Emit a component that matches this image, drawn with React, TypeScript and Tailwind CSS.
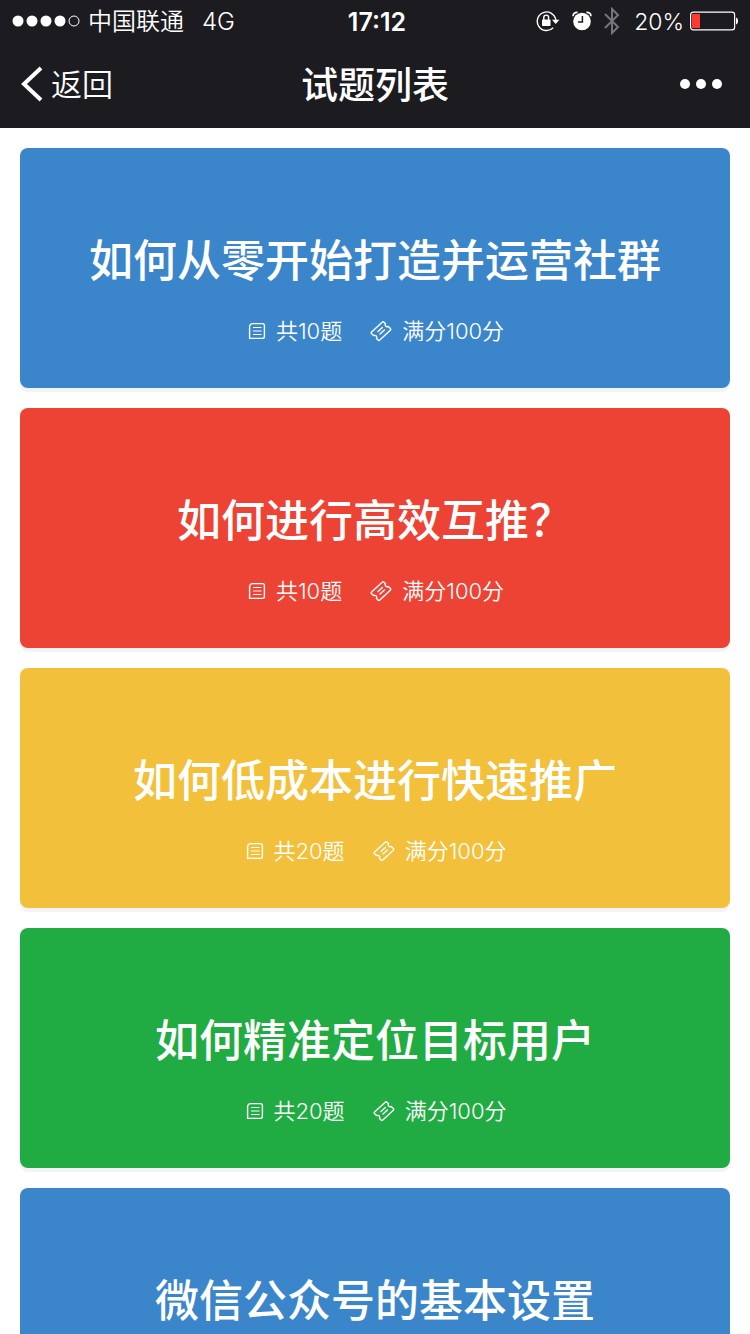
import clsx from "clsx";

interface Quiz {
   id: number;
   title: string;
   questions: number;
   score: number;
}

const quizzes: Quiz[] = [
   { id: 1, title: "如何从零开始打造并运营社群", questions: 10, score: 100 },
   { id: 2, title: "如何进行高效互推？", questions: 10, score: 100 },
   { id: 3, title: "如何低成本进行快速推广", questions: 20, score: 100 },
   { id: 4, title: "如何精准定位目标用户", questions: 20, score: 100 },
   { id: 5, title: "微信公众号的基本设置", questions: 20, score: 100 },
];

const cardColors = ["bg-[#3b86ca]", "bg-[#ed4335]", "bg-[#f2c03a]", "bg-[#21ac43]"];

function SignalDots() {
   return (
      <svg width="68" height="12" viewBox="0 0 68 12" fill="#fff" aria-hidden="true">
         <circle cx="6" cy="6" r="5.5" />
         <circle cx="20" cy="6" r="5.5" />
         <circle cx="34" cy="6" r="5.5" />
         <circle cx="48" cy="6" r="5.5" />
         <circle cx="62" cy="6" r="5" fill="none" stroke="#fff" />
      </svg>
   );
}

function RotationLockIcon() {
   return (
      <svg width="24" height="22" viewBox="0 0 24 22" aria-hidden="true">
         <path d="M17.2 17.8A9.3 9.3 0 1 1 19.8 10" fill="none" stroke="#fff" strokeWidth="1.4" />
         <path d="M16 9.8h7.4l-3.7 4.2z" fill="#fff" />
         <rect x="6" y="9.5" width="8.5" height="6.5" rx="0.8" fill="#fff" />
         <path d="M7.8 10V7.5a2.4 2.4 0 0 1 4.8 0V10" fill="none" stroke="#fff" strokeWidth="1.4" />
      </svg>
   );
}

function AlarmIcon() {
   return (
      <svg width="20" height="20" viewBox="0 0 20 20" aria-hidden="true">
         <circle cx="10" cy="10.5" r="8.8" fill="#fff" />
         <path d="M1 5.2C1 2.6 3 1.2 5.6 1.4M19 5.2c0-2.6-2-4-4.6-3.8" fill="none" stroke="#fff" strokeWidth="1.6" />
         <path d="M10.4 5v6H6" fill="none" stroke="#1c1b20" strokeWidth="1.5" />
      </svg>
   );
}

function BluetoothIcon() {
   return (
      <svg width="16" height="28" viewBox="0 0 16 28" aria-hidden="true">
         <path d="M1 7l13 13-6 6V2l6 6L1 21" fill="none" stroke="#77767a" strokeWidth="2" />
      </svg>
   );
}

function BatteryIcon() {
   return (
      <svg width="48" height="20" viewBox="0 0 48 20" aria-hidden="true">
         <rect x="0.6" y="1.1" width="44" height="17.8" rx="2.6" fill="none" stroke="#fff" strokeWidth="1.2" />
         <rect x="2" y="3" width="8" height="14" fill="#ff3b30" />
         <path d="M46 6.5c2.7.6 2.7 6.4 0 7z" fill="#fff" />
      </svg>
   );
}

function ListIcon() {
   return (
      <svg width="18" height="18" viewBox="0 0 18 18" fill="none" stroke="#fff" strokeWidth="1.4" aria-hidden="true">
         <path d="M4.6 1.6h10a1.8 1.8 0 0 1 1.8 1.8v11.2a1.8 1.8 0 0 1-1.8 1.8H1.6V4.6a3 3 0 0 1 3-3z" />
         <path d="M5 5.5h8.5M5 9h8.5M5 12.5h8.5" strokeWidth="1.2" />
      </svg>
   );
}

function TicketIcon() {
   return (
      <svg width="22" height="22" viewBox="0 0 22 22" fill="none" stroke="#fff" strokeWidth="1.4" strokeLinejoin="round" strokeLinecap="round" aria-hidden="true">
         <path d="M12.2 2.2a1.3 1.3 0 0 1 1.8 0l1.5 1.5c-.5 1-.3 1.9.3 2.5s1.5.8 2.5.3l2 1.9a1.3 1.3 0 0 1 0 1.8L9.8 20a1.3 1.3 0 0 1-1.8 0l-1.5-1.4c.4-1 .3-1.9-.3-2.6s-1.6-.8-2.6-.4l-2-1.9a1.3 1.3 0 0 1 0-1.8z" />
         <path d="M8 11.6l4.4-4.1M10 14l4.4-4.1" />
      </svg>
   );
}

function StatusBar() {
   return (
      <div className="grid h-10 grid-cols-[1fr_auto_1fr] items-center px-3 leading-10">
         <div className="flex items-center text-2xl font-[350]">
            <SignalDots />
            <span className="ml-2 pt-[2px]">中国联通</span>
            <span className="ml-[18px] pt-[2px]">4G</span>
         </div>
         <time className="pt-[2px] pl-1 text-[25px] font-semibold">17:12</time>
         <div className="flex items-center justify-end text-[23px] font-[350]">
            <RotationLockIcon />
            <span className="ml-3"><AlarmIcon /></span>
            <span className="ml-3"><BluetoothIcon /></span>
            <span className="ml-[14px] pt-[2px]">20%</span>
            <span className="ml-[6px]"><BatteryIcon /></span>
         </div>
      </div>
   );
}

function NavBar() {
   return (
      <div className="grid h-22 grid-cols-[1fr_auto_1fr] items-center px-5">
         <button type="button" className="flex items-center gap-2 text-[31px] font-[350]">
            <svg width="23" height="36" viewBox="0 0 23 36" fill="none" stroke="#fff" strokeWidth="4" aria-hidden="true">
               <path d="M21 2L4 18l17 16" />
            </svg>
            <span className="pt-[2px]">返回</span>
         </button>
         <h1 className="pt-1 text-[37px] font-medium">试题列表</h1>
         <button type="button" aria-label="更多" className="flex justify-end gap-[6px] pr-2">
            <span className="size-[10px] rounded-full bg-white" />
            <span className="size-[10px] rounded-full bg-white" />
            <span className="size-[10px] rounded-full bg-white" />
         </button>
      </div>
   );
}

function QuizCard({ quiz, color }: { quiz: Quiz; color: string }) {
   return (
      <a href={`#quiz-${quiz.id}`} className={clsx("block rounded-lg pt-20 pb-10 text-center text-white shadow-[0_4px_0_#f4f4f7]", color)}>
         <h2 className="text-[44px] leading-[66px] font-medium">{quiz.title}</h2>
         <div className="mt-5 flex h-[34px] items-center justify-center gap-7 pl-[2px] text-[22px] leading-[34px] font-[350]">
            <span className="flex items-center gap-[10px]">
               <ListIcon />
               共{quiz.questions}题
            </span>
            <span className="flex items-center gap-[10px]">
               <TicketIcon />
               满分{quiz.score}分
            </span>
         </div>
      </a>
   );
}

export default function App() {
   return (
      <div lang="zh-CN" className="flex h-screen flex-col bg-white font-[Inter,'Noto_Sans_CJK_SC',sans-serif]">
         <header className="shrink-0 bg-[#1c1b20] text-white">
            <StatusBar />
            <NavBar />
         </header>
         <main className="min-h-0 flex-1 overflow-y-auto p-5 [scrollbar-width:none]">
            <ul className="flex flex-col gap-5">
               {quizzes.map((quiz, index) => (
                  <li key={quiz.id}>
                     <QuizCard quiz={quiz} color={cardColors[index % cardColors.length]} />
                  </li>
               ))}
            </ul>
         </main>
      </div>
   );
}
